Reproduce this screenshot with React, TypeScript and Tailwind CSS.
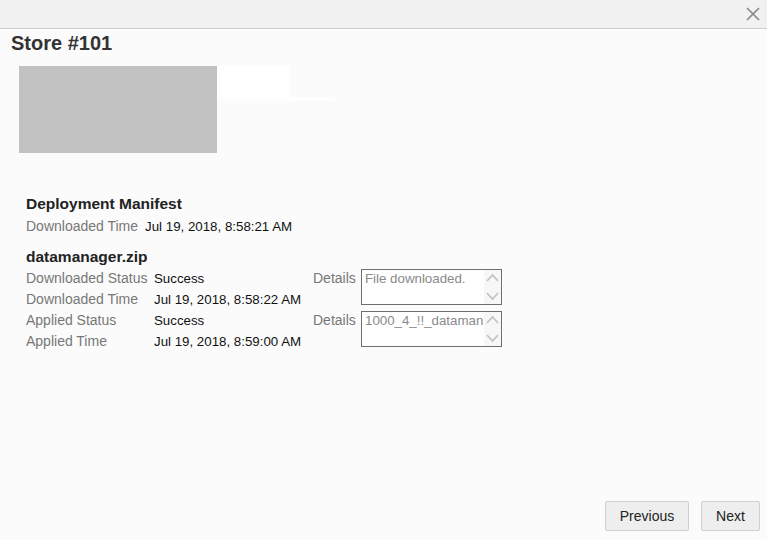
import React from 'react';

const FONT = { fontFamily: '"Liberation Sans", Arial, sans-serif' };

const Chevrons = () => (
  <div className="flex w-[17px] flex-col items-center justify-between bg-[#f7f7f7] py-[3px]">
    <svg width="13" height="9" viewBox="0 0 13 9" fill="none" stroke="#c2c2c2" strokeWidth="1.7">
      <path d="M1 8 L6.5 2 L12 8" />
    </svg>
    <svg width="13" height="9" viewBox="0 0 13 9" fill="none" stroke="#c2c2c2" strokeWidth="1.7">
      <path d="M1 1 L6.5 7 L12 1" />
    </svg>
  </div>
);

const DetailsBox = ({ text }: { text: string }) => (
  <div className="flex h-[36px] w-[141px] overflow-hidden border border-[#6f6f6f] bg-white">
    <div className="min-w-0 flex-1 overflow-hidden whitespace-nowrap pl-[3px] pt-[1px] text-[13.3px] leading-[16px] text-[#8a8a8a]">
      {text}
    </div>
    <Chevrons />
  </div>
);

export default function App() {
  return (
    <div className="flex h-[540px] w-full flex-col bg-[#fbfbfb]" style={FONT}>
      <div className="flex h-[29px] items-center justify-end border-b border-[#cdcdcd] bg-[#f1f1f1] pr-[7px]">
        <svg width="14" height="14" viewBox="0 0 14 14" stroke="#8a8a8a" strokeWidth="1.7">
          <path d="M1 1 L13 13 M13 1 L1 13" />
        </svg>
      </div>

      <h1 className="pl-[11px] pt-[2px] text-[20px] font-bold leading-[24px] text-[#333]">Store #101</h1>

      <div className="mt-[11px] flex pl-[19px]">
        <div className="h-[87px] w-[198px] bg-[#c2c2c2]" />
        <div className="flex flex-col">
          <div className="h-[31px] w-[73px] bg-white" />
          <div className="h-[4px] w-[118px] bg-[#fefefe]" />
        </div>
      </div>

      <div className="pl-[26px] pt-[42px]">
        <h2 className="text-[15.5px] font-bold leading-[18px] text-[#222]">Deployment Manifest</h2>
        <div className="mt-[4px] flex items-baseline gap-[7px] leading-[18px]">
          <span className="text-[14px] text-[#777]">Downloaded Time</span>
          <span className="text-[13.3px] text-[#111]">Jul 19, 2018, 8:58:21 AM</span>
        </div>

        <h2 className="mt-[12px] text-[15.5px] font-bold leading-[18px] text-[#222]">datamanager.zip</h2>
        <div className="mt-[2px] grid grid-cols-[128px_159px_48px_141px] grid-rows-[21px_21px_21px_21px] text-[13.3px] leading-[21px]">
          <span className="text-[14px] text-[#777]">Downloaded Status</span>
          <span className="text-[#111]">Success</span>
          <span className="row-span-2 text-[14px] text-[#777]">Details</span>
          <div className="row-span-2 pt-[1px]">
            <DetailsBox text="File downloaded." />
          </div>
          <span className="text-[14px] text-[#777]">Downloaded Time</span>
          <span className="text-[#111]">Jul 19, 2018, 8:58:22 AM</span>
          <span className="text-[14px] text-[#777]">Applied Status</span>
          <span className="text-[#111]">Success</span>
          <span className="row-span-2 text-[14px] text-[#777]">Details</span>
          <div className="row-span-2 pt-[1px]">
            <DetailsBox text="1000_4_!!_dataman" />
          </div>
          <span className="text-[14px] text-[#777]">Applied Time</span>
          <span className="text-[#111]">Jul 19, 2018, 8:59:00 AM</span>
        </div>
      </div>

      <div className="mt-auto flex justify-end gap-[12px] pb-[9px] pr-[7px]">
        <button className="h-[30px] w-[84px] rounded-[2px] border border-[#cfcfcf] bg-[#eeeeee] text-[14px] text-[#222]">
          Previous
        </button>
        <button className="h-[30px] w-[59px] rounded-[2px] border border-[#cfcfcf] bg-[#eeeeee] text-[14px] text-[#222]">
          Next
        </button>
      </div>
    </div>
  );
}
